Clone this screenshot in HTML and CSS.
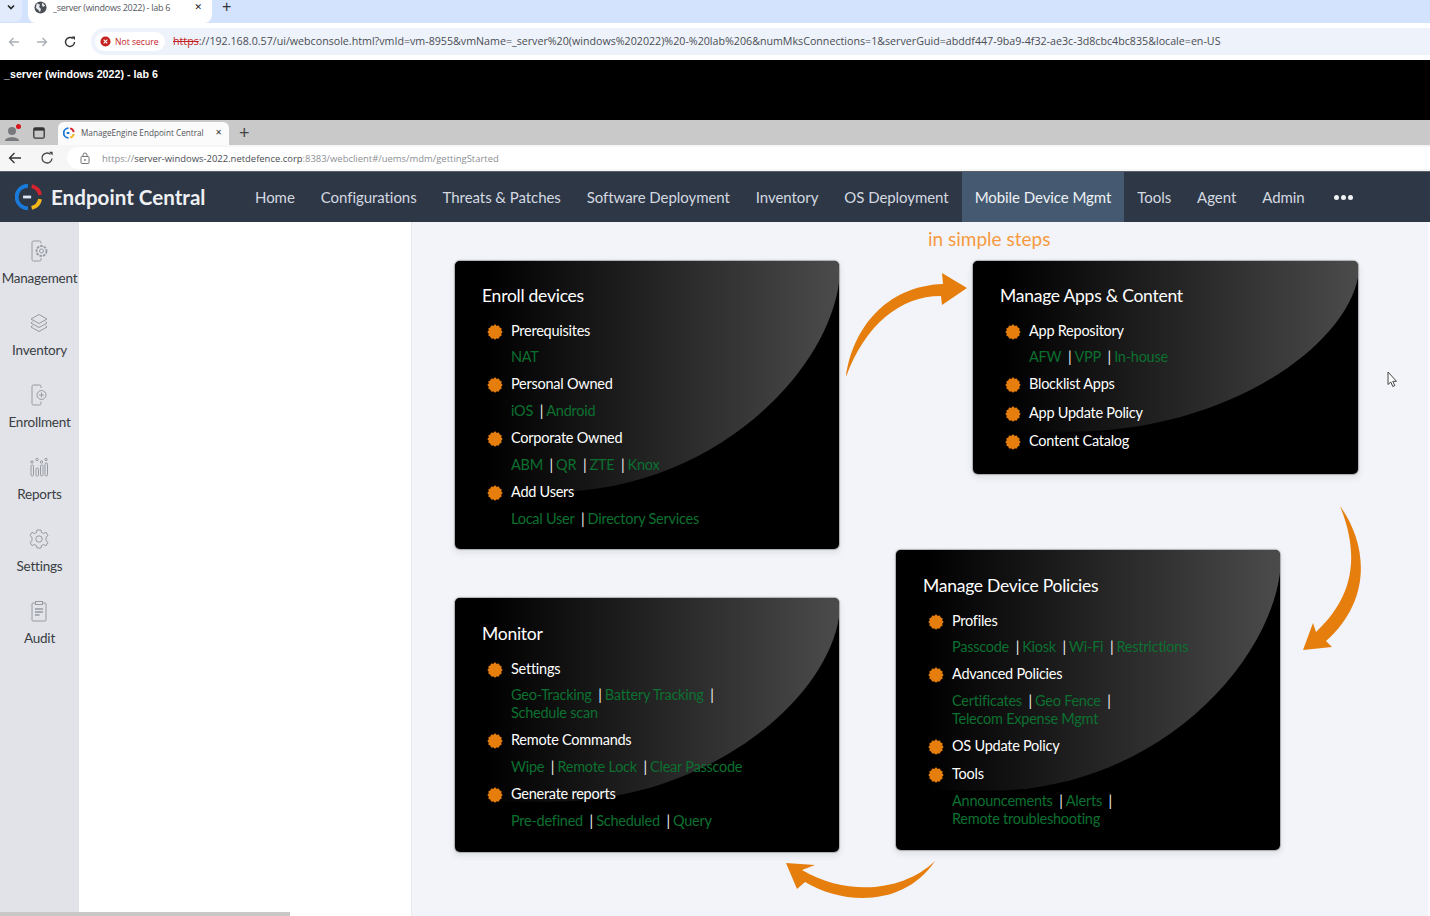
FILE: index.html
```html
<!DOCTYPE html>
<html lang="en">
<head>
<meta charset="utf-8">
<title>Endpoint Central</title>
<link rel="stylesheet" href="styles.css">
</head>
<body>
<svg class="defs" width="0" height="0" aria-hidden="true">
  <defs>
    <linearGradient id="glossfill" x1="0" x2="1" y1="0" y2="0">
      <stop offset="0.08" stop-color="#000"/>
      <stop offset="1" stop-color="#4b4b4b"/>
    </linearGradient>
    <symbol id="glossshape" viewBox="0 0 385 288" preserveAspectRatio="none">
      <path d="M0 0H385V22C372 115 255 231 95 231H0Z" fill="url(#glossfill)"/>
    </symbol>
    <symbol id="bullet" viewBox="0 0 16 16">
      <g fill="#e67e0e">
        <circle cx="8" cy="8" r="6.6"/>
        <circle cx="8" cy="1.800" r="1.2"/><circle cx="11.100" cy="2.600" r="1.2"/><circle cx="13.400" cy="4.900" r="1.2"/>
        <circle cx="14.200" cy="8" r="1.2"/><circle cx="13.400" cy="11.100" r="1.2"/><circle cx="11.100" cy="13.400" r="1.2"/>
        <circle cx="8" cy="14.200" r="1.2"/><circle cx="4.900" cy="13.400" r="1.2"/><circle cx="2.600" cy="11.100" r="1.2"/>
        <circle cx="1.800" cy="8" r="1.2"/><circle cx="2.600" cy="4.900" r="1.2"/><circle cx="4.900" cy="2.600" r="1.2"/>
      </g>
    </symbol>
  </defs>
</svg>

<div class="tabstrip">
  <div class="tab-toggle"><svg width="10" height="10" viewBox="0 0 10 10"><path d="M2 3.500L5 6.500L8 3.500" fill="none" stroke="#222" stroke-width="1.6"/></svg></div>
  <div class="tab">
    <svg class="tab-globe" width="13" height="13" viewBox="0 0 14 14"><circle cx="7" cy="7" r="6.500" fill="#4b4f55"/><path d="M3 2.500L6.500 4L5.500 6.500L7.500 8.500L6.500 12L4.500 9.500L2 7.500ZM9 1.500L12 5L9.500 6.500L8.500 4Z" fill="#e8ebf0"/></svg>
    <span class="tab-title">_server (windows 2022) - lab 6</span>
    <span class="tab-close">✕</span>
  </div>
  <span class="tab-plus">+</span>
</div>

<div class="toolbar">
  <svg class="nav-ic" width="14" height="14" viewBox="0 0 14 14"><path d="M12 7H2.500M6.500 3L2.500 7L6.500 11" fill="none" stroke="#aab0b7" stroke-width="1.4"/></svg>
  <svg class="nav-ic" width="14" height="14" viewBox="0 0 14 14"><path d="M2 7H11.500M7.500 3L11.500 7L7.500 11" fill="none" stroke="#aab0b7" stroke-width="1.4"/></svg>
  <svg class="nav-ic" width="14" height="14" viewBox="0 0 14 14"><path d="M11.500 7A4.500 4.500 0 1 1 10 3.600" fill="none" stroke="#333" stroke-width="1.4"/><path d="M8.500 1.500H12V5Z" fill="#333"/></svg>
  <div class="urlbar">
    <span class="chip">
      <svg width="11" height="11" viewBox="0 0 12 12"><circle cx="6" cy="6" r="5.500" fill="#c5221f"/><path d="M4 4L8 8M8 4L4 8" stroke="#fff" stroke-width="1.3"/></svg>
      <span class="chip-text">Not secure</span>
    </span>
    <span class="url"><span class="url-bad">https</span>://192.168.0.57/ui/webconsole.html?vmId=vm-8955&amp;vmName=_server%20(windows%202022)%20-%20lab%206&amp;numMksConnections=1&amp;serverGuid=abddf447-9ba9-4f32-ae3c-3d8cbc4bc835&amp;locale=en-US</span>
  </div>
</div>

<div class="console-bar">_server (windows 2022) - lab 6</div>

<div class="inner-tabstrip">
  <div class="profile">
    <svg width="18" height="20" viewBox="0 0 18 20"><circle cx="8" cy="8" r="4" fill="#77797c"/><path d="M1 18C1 13 15 13 15 18Z" fill="#77797c"/><circle cx="14.500" cy="3.500" r="2.500" fill="#d8141c"/></svg>
  </div>
  <svg class="win-ic" width="12" height="12" viewBox="0 0 12 12"><rect x="0.800" y="0.800" width="10.400" height="10.400" rx="1.500" fill="none" stroke="#333" stroke-width="1.3"/><rect x="1" y="1" width="10" height="2.600" fill="#333"/></svg>
  <div class="inner-tab">
    <svg width="12" height="12" viewBox="0 0 26 26"><path d="M12 2.500A10.500 10.500 0 0 0 12 23.500M8 13H14" fill="none" stroke="#1a7ad9" stroke-width="4"/><path d="M15.500 2.800A10.500 10.500 0 0 1 23.300 11" fill="none" stroke="#d5232f" stroke-width="4"/><path d="M23.300 15A10.500 10.500 0 0 1 15.500 23.200" fill="none" stroke="#f4b71a" stroke-width="4"/></svg>
    <span class="inner-tab-title">ManageEngine Endpoint Central</span>
    <span class="inner-tab-close">✕</span>
  </div>
  <span class="inner-plus">+</span>
</div>

<div class="inner-toolbar">
  <svg class="inner-back" width="14" height="14" viewBox="0 0 14 14"><path d="M13 7H1.500M6.500 2L1.500 7L6.500 12" fill="none" stroke="#333" stroke-width="1.3"/></svg>
  <svg class="inner-reload" width="14" height="14" viewBox="0 0 14 14"><path d="M12 7.500A5 5 0 1 1 10.500 3.400" fill="none" stroke="#444" stroke-width="1.3"/><path d="M9 .8H12.600V4.400Z" fill="#444"/></svg>
  <div class="inner-urlbar">
    <svg width="10" height="12" viewBox="0 0 10 12"><rect x="1" y="4.500" width="8" height="7" rx="1" fill="none" stroke="#777"/><path d="M3 4.500V3A2 2 0 0 1 7 3V4.500" fill="none" stroke="#777"/><circle cx="5" cy="8" r=".9" fill="#777"/></svg>
    <span class="inner-url">https://<span class="inner-host">server-windows-2022.netdefence.corp</span>:8383/webclient#/uems/mdm/gettingStarted</span>
  </div>
</div>

<header class="appnav">
  <div class="brand">
    <svg width="28" height="28" viewBox="0 0 26 26"><path d="M12 2.500A10.500 10.500 0 0 0 12 23.500" fill="none" stroke="#1a7ad9" stroke-width="3.600"/><path d="M7.500 13H15" fill="none" stroke="#dfe9f5" stroke-width="2.600"/><path d="M15.500 2.800A10.500 10.500 0 0 1 23.300 11" fill="none" stroke="#d5232f" stroke-width="3.600"/><path d="M23.300 15A10.500 10.500 0 0 1 15.500 23.200" fill="none" stroke="#f4b71a" stroke-width="3.600"/></svg>
    <span class="brand-name">Endpoint Central</span>
  </div>
  <nav class="appnav-links">
    <a class="navlink">Home</a>
    <a class="navlink">Configurations</a>
    <a class="navlink">Threats &amp; Patches</a>
    <a class="navlink">Software Deployment</a>
    <a class="navlink">Inventory</a>
    <a class="navlink">OS Deployment</a>
    <a class="navlink is-active">Mobile Device Mgmt</a>
    <a class="navlink">Tools</a>
    <a class="navlink">Agent</a>
    <a class="navlink">Admin</a>
    <span class="navmore"><i></i><i></i><i></i></span>
  </nav>
</header>

<div class="workspace">
  <aside class="rail">
    <div class="rail-item">
      <svg width="24" height="24" viewBox="0 0 24 24" fill="none" stroke="#969aa0"><path d="M14 4.500V3.500A1.500 1.500 0 0 0 12.500 2H6.500A1.500 1.500 0 0 0 5 3.500V20.500A1.500 1.500 0 0 0 6.500 22H12.500A1.500 1.500 0 0 0 14 20.500V19"/><circle cx="14.500" cy="12" r="5" stroke-width="1.800" stroke-dasharray="2.600 1"/><circle cx="14.500" cy="12" r="2"/></svg>
      <span class="rail-label">Management</span>
    </div>
    <div class="rail-item">
      <svg width="24" height="24" viewBox="0 0 24 24" fill="none" stroke="#969aa0"><path d="M12 3.500L20 8L12 12.500L4 8Z"/><path d="M5.500 10.500L4 12L12 16.500L20 12L18.500 10.500"/><path d="M5.500 14.500L4 16L12 20.500L20 16L18.500 14.500"/></svg>
      <span class="rail-label">Inventory</span>
    </div>
    <div class="rail-item">
      <svg width="24" height="24" viewBox="0 0 24 24" fill="none" stroke="#969aa0"><path d="M14 5V3.500A1.500 1.500 0 0 0 12.500 2H6.500A1.500 1.500 0 0 0 5 3.500V20.500A1.500 1.500 0 0 0 6.500 22H12.500A1.500 1.500 0 0 0 14 20.500V18.500"/><circle cx="14.500" cy="12" r="4.500"/><path d="M14.500 9.500V14.500M12 12H17"/></svg>
      <span class="rail-label">Enrollment</span>
    </div>
    <div class="rail-item">
      <svg width="24" height="24" viewBox="0 0 24 24" fill="none" stroke="#969aa0"><rect x="4" y="10" width="2.500" height="11" rx="1.200"/><rect x="9" y="13" width="2.500" height="8" rx="1.200"/><rect x="13.500" y="10" width="2.500" height="11" rx="1.200"/><rect x="18" y="8" width="2.500" height="13" rx="1.200"/><circle cx="5" cy="7" r="1.200"/><circle cx="10" cy="4.500" r="1.200"/><circle cx="14.500" cy="7" r="1.200"/><circle cx="19" cy="4.500" r="1.200"/></svg>
      <span class="rail-label">Reports</span>
    </div>
    <div class="rail-item">
      <svg width="24" height="24" viewBox="0 0 24 24" fill="none" stroke="#969aa0"><path d="M10 3H14L14.500 5.500L16.800 6.500L19 5.200L21 8.600L19 10.300V13.700L21 15.400L19 18.800L16.800 17.500L14.500 18.500L14 21H10L9.500 18.500L7.200 17.500L5 18.800L3 15.400L5 13.700V10.300L3 8.600L5 5.200L7.200 6.500L9.500 5.500Z" stroke-linejoin="round"/><circle cx="12" cy="12" r="3.200"/></svg>
      <span class="rail-label">Settings</span>
    </div>
    <div class="rail-item">
      <svg width="24" height="24" viewBox="0 0 24 24" fill="none" stroke="#969aa0"><rect x="5" y="4" width="14" height="18" rx="1"/><rect x="8.500" y="2.500" width="7" height="3" fill="#e1e3e9"/><path d="M8 10H16" stroke-width="1.500"/><path d="M8 13H16" stroke-width="1.500"/><path d="M8 16H12.500" stroke-width="1.500"/></svg>
      <span class="rail-label">Audit</span>
    </div>
  </aside>
  <div class="blank-panel"></div>
  <main class="canvas">
    <h2 class="steps-title">in simple steps</h2>

    <svg class="arrows" viewBox="411 222 1019 694" aria-hidden="true">
      <g fill="#e67e0e">
        <path d="M846 377C852 330 885 286 943 284L942 273L967 288L942 305L941 296C900 296 865 325 846 377Z"/>
        <path d="M1340 506C1368 545 1372 600 1326 641L1332 647L1303 650L1313 623L1316 632C1342 607 1366 570 1340 506Z"/>
        <path d="M935 861C905 890 850 898 802 870L815 865L786 863L797 889L805 882C845 906 905 906 935 861Z"/>
      </g>
    </svg>

    <section class="card card-enroll">
      <svg class="gloss"><use href="#glossshape"/></svg>
      <h3 class="card-title">Enroll devices</h3>
      <div class="item"><svg class="dot"><use href="#bullet"/></svg>Prerequisites</div>
      <div class="links"><a>NAT</a></div>
      <div class="item"><svg class="dot"><use href="#bullet"/></svg>Personal Owned</div>
      <div class="links"><a>iOS</a><span class="sep">|</span><a>Android</a></div>
      <div class="item"><svg class="dot"><use href="#bullet"/></svg>Corporate Owned</div>
      <div class="links"><a>ABM</a><span class="sep">|</span><a>QR</a><span class="sep">|</span><a>ZTE</a><span class="sep">|</span><a>Knox</a></div>
      <div class="item"><svg class="dot"><use href="#bullet"/></svg>Add Users</div>
      <div class="links"><a>Local User</a><span class="sep">|</span><a>Directory Services</a></div>
    </section>

    <section class="card card-apps">
      <svg class="gloss"><use href="#glossshape"/></svg>
      <h3 class="card-title">Manage Apps &amp; Content</h3>
      <div class="item"><svg class="dot"><use href="#bullet"/></svg>App Repository</div>
      <div class="links"><a>AFW</a><span class="sep">|</span><a>VPP</a><span class="sep">|</span><a>In-house</a></div>
      <div class="item"><svg class="dot"><use href="#bullet"/></svg>Blocklist Apps</div>
      <div class="item"><svg class="dot"><use href="#bullet"/></svg>App Update Policy</div>
      <div class="item"><svg class="dot"><use href="#bullet"/></svg>Content Catalog</div>
    </section>

    <section class="card card-policies">
      <svg class="gloss"><use href="#glossshape"/></svg>
      <h3 class="card-title">Manage Device Policies</h3>
      <div class="item"><svg class="dot"><use href="#bullet"/></svg>Profiles</div>
      <div class="links"><a>Passcode</a><span class="sep">|</span><a>Kiosk</a><span class="sep">|</span><a>Wi-Fi</a><span class="sep">|</span><a>Restrictions</a></div>
      <div class="item"><svg class="dot"><use href="#bullet"/></svg>Advanced Policies</div>
      <div class="links"><a>Certificates</a><span class="sep">|</span><a>Geo Fence</a><span class="sep">|</span><a>Telecom Expense Mgmt</a></div>
      <div class="item"><svg class="dot"><use href="#bullet"/></svg>OS Update Policy</div>
      <div class="item"><svg class="dot"><use href="#bullet"/></svg>Tools</div>
      <div class="links"><a>Announcements</a><span class="sep">|</span><a>Alerts</a><span class="sep">|</span><a>Remote troubleshooting</a></div>
    </section>

    <section class="card card-monitor">
      <svg class="gloss"><use href="#glossshape"/></svg>
      <h3 class="card-title">Monitor</h3>
      <div class="item"><svg class="dot"><use href="#bullet"/></svg>Settings</div>
      <div class="links"><a>Geo-Tracking</a><span class="sep">|</span><a>Battery Tracking</a><span class="sep">|</span><a>Schedule scan</a></div>
      <div class="item"><svg class="dot"><use href="#bullet"/></svg>Remote Commands</div>
      <div class="links"><a>Wipe</a><span class="sep">|</span><a>Remote Lock</a><span class="sep">|</span><a>Clear Passcode</a></div>
      <div class="item"><svg class="dot"><use href="#bullet"/></svg>Generate reports</div>
      <div class="links"><a>Pre-defined</a><span class="sep">|</span><a>Scheduled</a><span class="sep">|</span><a>Query</a></div>
    </section>

    <svg class="cursor" width="11" height="17" viewBox="0 0 11 17"><path d="M1 1V13.500L3.800 11L5.800 15.500L7.800 14.600L5.800 10.300H9.500Z" fill="#fff" stroke="#444" stroke-width="1"/></svg>
  </main>
  <div class="hscroll"></div>
</div>
</body>
</html>
```

FILE: styles.css
```css
* { box-sizing: border-box; }
html, body { margin: 0; padding: 0; }
body {
  width: 1430px;
  height: 916px;
  overflow: hidden;
  display: flex;
  flex-direction: column;
  background: #fff;
  font-family: "Lato", "Liberation Sans", sans-serif;
}
.defs { position: absolute; }

/* outer browser */
.tabstrip {
  height: 23px;
  display: flex;
  align-items: stretch;
  background: #d3e3fd;
  flex: none;
}
.tab-toggle {
  width: 22px;
  margin-bottom: 1px;
  background: #e2ebfb;
  border-radius: 0 0 7px 0;
  display: flex;
  align-items: flex-start;
  justify-content: center;
  padding-top: 2px;
}
.tab {
  width: 184px;
  margin-left: 6px;
  background: #fff;
  border-radius: 0 0 8px 8px;
  display: flex;
  align-items: flex-start;
  padding: 1px 10px 0 6px;
  height: 23px;
}
.tab-globe { flex: none; }
.tab-title {
  margin-left: 6px;
  font: 9px/13px "Open Sans", sans-serif;
  letter-spacing: -0.28px;
  color: #55585d;
  flex: 1;
  white-space: nowrap;
}
.tab-close { font: 9px/13px "DejaVu Sans", sans-serif; color: #222; }
.tab-plus { margin-left: 10px; font: 16px/14px "Liberation Sans", sans-serif; color: #333; }

.toolbar {
  height: 37px;
  flex: none;
  background: #fff;
  display: flex;
  align-items: center;
  padding: 0 0 0 7px;
  gap: 14px;
}
.urlbar {
  flex: 1;
  height: 27px;
  background: #eef3fb;
  border-radius: 14px 0 0 14px;
  display: flex;
  align-items: center;
  padding-left: 4px;
  gap: 8px;
}
.chip {
  width: 70px;
  height: 19px;
  background: #fff;
  border-radius: 10px;
  display: flex;
  align-items: center;
  gap: 4px;
  padding-left: 5px;
}
.chip-text { font: 8.6px/12px "Open Sans", sans-serif; color: #c5221f; white-space: nowrap; }
.url { font: 10.680px/14px "Open Sans", sans-serif; color: #4a4d52; white-space: nowrap; padding-bottom: 2px; }
.url-bad { color: #c5221f; text-decoration: line-through; }

.console-bar {
  height: 60px;
  flex: none;
  background: #000;
  color: #fff;
  font: bold 10.700px/14px "Liberation Sans", sans-serif;
  padding: 7px 0 0 4px;
}

/* inner browser */
.inner-tabstrip {
  height: 25px;
  flex: none;
  background: #c9c9c9;
  display: flex;
  align-items: center;
}
.profile { width: 33px; padding: 1px 0 0 4px; display: flex; }
.win-ic { flex: none; }
.inner-tab {
  margin: 2px 0 0 13px;
  width: 171px;
  height: 23px;
  background: #fbfbfb;
  border-radius: 6px 6px 0 0;
  display: flex;
  align-items: center;
  padding: 0 7px 2px 5px;
  gap: 6px;
}
.inner-tab-title { font: 8.2px/12px "Open Sans", sans-serif; color: #50535a; flex: 1; white-space: nowrap; overflow: hidden; }
.inner-tab-close { font: 8px/12px "DejaVu Sans", sans-serif; color: #333; }
.inner-plus { margin-left: 10px; font: 18px/18px "Liberation Sans", sans-serif; color: #444; }

.inner-toolbar {
  height: 26px;
  flex: none;
  background: #f6f6f6;
  display: flex;
  align-items: center;
  padding-left: 8px;
}
.inner-reload { margin-left: 18px; }
.inner-urlbar {
  margin-left: 13px;
  flex: 1;
  height: 22px;
  background: #fff;
  border-radius: 11px 0 0 11px;
  display: flex;
  align-items: center;
  padding-left: 13px;
  gap: 12px;
}
.inner-url { font: 9.450px/13px "Open Sans", sans-serif; color: #8c8f94; white-space: nowrap; }
.inner-host { color: #4a4d52; }

/* app navigation */
.appnav {
  height: 51px;
  flex: none;
  background: #2d3746;
  border-top: 1px solid #5a6068;
  display: flex;
  align-items: stretch;
}
.brand {
  width: 242px;
  padding-left: 15px;
  display: flex;
  align-items: center;
  gap: 8px;
}
.brand-name {
  font-size: 20.600px;
  line-height: 24px;
  font-weight: 700;
  color: #eef0f3;
  white-space: nowrap;
}
.appnav-links { display: flex; align-items: stretch; flex: 1; }
.navlink {
  display: flex;
  align-items: center;
  padding: 0 13px;
  font-size: 15px;
  letter-spacing: -0.06px;
  color: #d4d9e0;
  white-space: nowrap;
}
.navlink.is-active { background: #455a70; color: #eef1f5; }
.navmore { display: flex; align-items: center; gap: 2px; margin-left: 16px; }
.navmore i { display: block; width: 5px; height: 5px; border-radius: 50%; background: #f0f2f5; }

/* workspace */
.workspace { flex: 1; display: flex; position: relative; min-height: 0; }
.rail {
  width: 79px;
  flex: none;
  background: #e1e3e9;
  padding-top: 17px;
  display: flex;
  flex-direction: column;
  gap: 24px;
}
.rail-item { display: flex; flex-direction: column; align-items: center; gap: 6px; }
.rail-item svg { margin-right: 2px; }
.rail-label { font-size: 13.500px; letter-spacing: -0.22px; line-height: 18px; color: #3a3d42; white-space: nowrap; }
.blank-panel { width: 332px; flex: none; background: #fff; }
.canvas {
  flex: 1;
  position: relative;
  background: #f2f4f9;
  border-left: 1px solid #e6e8ed;
  border-right: 2px solid #fafbfd;
}
.steps-title {
  margin: 0;
  padding: 5px 0 0 516px;
  font-size: 19px;
  line-height: 24px;
  font-weight: 400;
  color: #f79a3e;
}
.arrows { position: absolute; left: -1px; top: 0; width: 1019px; height: 694px; }
.cursor { position: absolute; left: 975px; top: 149px; }
.hscroll { position: absolute; left: 0; bottom: 0; width: 290px; height: 4px; background: #c8c8c8; }

/* diagram cards */
.card {
  position: absolute;
  width: 384px;
  padding: 23px 0 0 27px;
  background: #000;
  border-radius: 5px;
  box-shadow: 0 0 1px 1px rgba(120,120,120,.55), 0 3px 5px 2px #e3e5ea;
  overflow: hidden;
  color: #fff;
}
.card-enroll { left: 43px; top: 39px; height: 288px; }
.card-apps { left: 561px; top: 39px; width: 385px; height: 213px; }
.card-policies { left: 484px; top: 328px; height: 300px; padding-top: 24px; }
.card-monitor { left: 43px; top: 376px; height: 254px; padding-top: 24px; }
.gloss { position: absolute; left: 0; top: 0; width: 100%; height: 100%; }
.card-title {
  position: relative;
  margin: 0 0 13.500px;
  font-size: 17.500px;
  letter-spacing: -0.25px;
  line-height: 24px;
  font-weight: 400;
}
.item {
  position: relative;
  display: flex;
  align-items: center;
  font-size: 14.500px;
  letter-spacing: -0.25px;
  line-height: 18px;
  margin-bottom: 8.900px;
  padding-left: 5px;
}
.item + .item { padding-top: 1.500px; }
.dot { width: 16px; height: 16px; margin-right: 8px; margin-top: 2px; flex: none; }
.links {
  position: relative;
  padding-left: 29px;
  max-width: 310px;
  font-size: 14.500px;
  letter-spacing: -0.25px;
  line-height: 18px;
  margin-bottom: 8.900px;
}
.links a { display: inline-block; color: #0c7030; white-space: nowrap; }
.sep { display: inline-block; color: #f2f2f2; margin: 0 3.200px 0 6.600px; }
```
